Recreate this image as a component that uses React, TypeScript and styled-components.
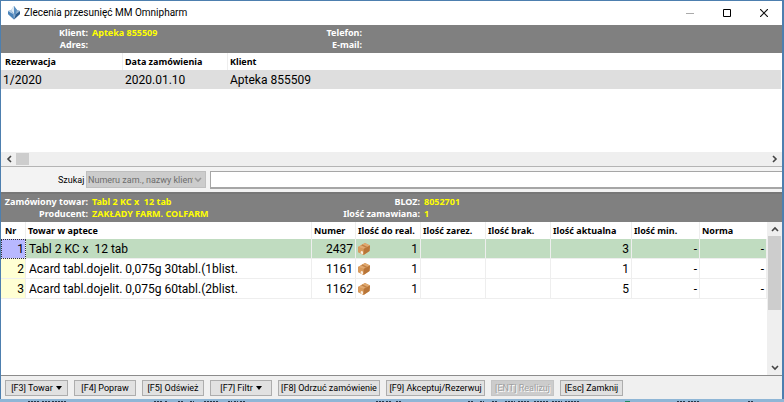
import React from 'react';
import styled, { createGlobalStyle, css } from 'styled-components';

const labelFont = '"Noto Sans", "Open Sans", sans-serif';
const cellFont = 'Roboto, "Noto Sans", sans-serif';
const controlFont = 'Roboto, "Noto Sans", sans-serif';

const GlobalStyle = createGlobalStyle`
  * { box-sizing: border-box; }
  body { margin: 0; background: #8fb6d6; color: #000; }
`;

const Desktop = styled.div`
  min-height: 100vh;
  display: flex;
  flex-direction: column;
`;

const Window = styled.main`
  flex: 1;
  display: flex;
  flex-direction: column;
  background: #fff;
  border: 1px solid #4d7faf;
  border-right-width: 2px;
  border-bottom-width: 0;
`;

const TitleBar = styled.header`
  height: 24px;
  display: flex;
  align-items: center;
  padding-left: 6px;
`;

const Title = styled.h1`
  flex: 1;
  margin: 0 0 0 3px;
  font: 400 10px/16px ${cellFont};
`;

const CaptionButton = styled.button`
  width: 37px;
  height: 24px;
  padding: 0;
  border: 0;
  background: none;
  display: grid;
  place-items: center;
`;

const InfoBar = styled.section<{ $wide?: boolean }>`
  display: grid;
  grid-template-columns: 87px ${p => (p.$wide ? '236px' : '178px')} 88px 1fr;
  column-gap: 4px;
  align-content: center;
  height: 28px;
  background: #808080;
  color: #fff;
  font: 700 9px/12px ${labelFont};
  white-space: pre;
`;

const InfoLabel = styled.span`
  text-align: right;
`;

const InfoValue = styled.span`
  color: #ff0;
`;

const Table = styled.table`
  width: 100%;
  table-layout: fixed;
  border-collapse: separate;
  border-spacing: 0;
  font: 400 12px/18px ${cellFont};
  white-space: pre;
`;

const Col = styled.col<{ $w?: number }>`
  ${p => p.$w && css`width: ${p.$w}px;`}
`;

const HeadCell = styled.th`
  height: 17px;
  padding: 0 0 0 2px;
  text-align: left;
  font: 700 9px/16px ${labelFont};
  border-right: 1px solid #eee;
  &:first-child { padding-left: 4px; }
  &:last-child { border-right: 0; }
`;

const OrderRow = styled.tr`
  background: #dedede;
`;

const OrderCell = styled.td`
  height: 19px;
  padding: 0 2px;
`;

const ItemRow = styled.tr<{ $selected?: boolean }>`
  background: ${p => (p.$selected ? '#c0dcc0' : '#fff')};
`;

const ItemCell = styled.td<{ $num?: boolean }>`
  height: 20px;
  padding: 0 2px 0 3px;
  text-align: ${p => (p.$num ? 'right' : 'left')};
  border-right: 1px solid #eee;
  border-bottom: 1px solid #eee;
`;

const IndexCell = styled(ItemCell)<{ $selected?: boolean }>`
  padding-right: 1px;
  background: ${p => (p.$selected ? '#b8b8ff' : '#ffffd4')};
  ${p => p.$selected && css`outline: 1px dotted #333; outline-offset: -1px;`}
`;

const Stock = styled.div`
  display: flex;
  align-items: center;
  justify-content: space-between;
  margin-left: -2px;
`;

const OrdersPane = styled.section`
  height: 99px;
  padding-right: 1px;
`;

const HScroll = styled.div`
  height: 14px;
  display: flex;
  align-items: center;
  background: #efefef;
`;

const HThumb = styled.div`
  width: 13px;
  height: 12px;
  background: #cdcdcd;
`;

const Spacer = styled.div`
  flex: 1;
`;

const ScrollButton = styled.button`
  width: 15px;
  height: 14px;
  flex: none;
  padding: 0;
  border: 0;
  background: none;
  display: grid;
  place-items: center;
`;

const SearchBar = styled.form`
  height: 28px;
  display: flex;
  align-items: center;
  padding-left: 57px;
  background: #f3f3f3;
  border-top: 1px solid #b4b4b4;
  border-bottom: 2px solid #777;
`;

const SearchLabel = styled.label`
  width: 28px;
  font: 400 9px/14px ${controlFont};
`;

const SelectBox = styled.div`
  width: 120px;
  height: 17px;
  display: flex;
  align-items: center;
  background: #ccc;
  border: 1px solid #bfbfbf;
  padding-right: 3px;
`;

const Select = styled.select`
  flex: 1;
  min-width: 0;
  height: 15px;
  padding: 0 1px;
  border: 0;
  appearance: none;
  background: transparent;
  font: 400 9px/14px ${controlFont};
  color: #6d6d6d;
  opacity: 1;
  text-overflow: clip;
  overflow: hidden;
`;

const SearchInput = styled.input`
  flex: 1;
  min-width: 0;
  height: 18px;
  margin-left: 4px;
  padding: 0 3px;
  background: #fff;
  border: 1px solid #a6a6a6;
  border-width: 1px 0 2px 1px;
  font: 400 10px/14px ${controlFont};
`;

const ItemsPane = styled.section`
  flex: 1;
  display: flex;
`;

const ItemsTableArea = styled.div`
  flex: 1;
  min-width: 0;
`;

const VScroll = styled.div`
  width: 15px;
  display: flex;
  flex-direction: column;
  align-items: center;
  justify-content: space-between;
  background: #efefef;
`;

const VTop = styled.div`
  display: flex;
  flex-direction: column;
  align-items: center;
`;

const VThumb = styled.div`
  width: 13px;
  height: 74px;
  background: #cdcdcd;
`;

const Toolbar = styled.footer`
  display: flex;
  gap: 6px;
  padding: 4px 4px 3px;
  background: #f0f0f0;
  border-top: 1px solid #8c8c8c;
`;

const ToolButton = styled.button<{ $w: number }>`
  width: ${p => p.$w}px;
  height: 16px;
  padding: 0;
  display: flex;
  align-items: center;
  justify-content: center;
  gap: 3px;
  border: 1px solid #adadad;
  background: #e1e1e1;
  color: #000;
  font: 400 9px/14px ${controlFont};
  white-space: nowrap;
  &:disabled {
    background: #ccc;
    border-color: #c4c4c4;
    color: #a0a0a0;
    text-shadow: 1px 1px 0 #fff;
  }
`;

const Behind = styled.svg`
  display: block;
  width: 100%;
  height: 3px;
`;

function AppIcon() {
  return (
    <svg width="14" height="14" viewBox="0 0 14 14" aria-hidden="true">
      <path d="M7 0 10 4 13 5 13 8 7 13.500 1 8 1 5 4 4Z" fill="#86a8ca" />
      <path d="M7 0 8 5 7 8 4 4Z" fill="#e0ecf6" />
      <path d="M7 0 10 4 9 9 7 8Z" fill="#5b8fc0" />
      <path d="M1 5 6 8 7 13.500 1 8Z" fill="#4a84bb" />
      <path d="M13 5 9 8 7 13.500 13 8Z" fill="#2b5c8e" />
      <path d="M4 4 6 8 1 5Z" fill="#b8d0e6" />
      <path d="M10 4 13 5 9 8Z" fill="#93b4d2" />
    </svg>
  );
}

function BoxIcon() {
  return (
    <svg width="14" height="14" viewBox="0 0 14 14" aria-hidden="true">
      <path d="M1 5 8 1 13 3.500 12.500 9 6.500 13 1 10Z" fill="#cf8f50" />
      <path d="M1 5 8 1 13 3.500 6.500 7Z" fill="#e0a970" />
      <path d="M6.500 7 13 3.500 12.500 9 6.500 13Z" fill="#b87538" />
      <path d="M1 5 6.500 7 6.500 13 1 10Z" fill="#d79a5c" />
      <path d="M4 3.300 5.600 2.400 10.500 4.900 9 5.700Z" fill="#bf8145" />
      <path d="M4 9 6 9.600 6 12.400 3.500 11.200Z" fill="#faeddd" />
    </svg>
  );
}

const arrows = {
  left: 'M6 1 3 4 6 7',
  right: 'M2 1 5 4 2 7',
  up: 'M1 6 4 3 7 6',
  down: 'M1 2 4 5 7 2',
};

function Chevron({ dir, color = '#444' }: { dir: keyof typeof arrows; color?: string }) {
  return (
    <svg width="8" height="8" viewBox="0 0 8 8" aria-hidden="true">
      <path d={arrows[dir]} fill="none" stroke={color} strokeWidth="1.6" />
    </svg>
  );
}

const items = [
  { nr: 1, name: 'Tabl 2 KC x  12 tab', num: 2437, real: 1, now: 3 },
  { nr: 2, name: 'Acard tabl.dojelit. 0,075g 30tabl.(1blist.', num: 1161, real: 1, now: 1 },
  { nr: 3, name: 'Acard tabl.dojelit. 0,075g 60tabl.(2blist.', num: 1162, real: 1, now: 5 },
];

const itemHeads = ['Nr', 'Towar w aptece', 'Numer', 'Ilość do real.', 'Ilość zarez.', 'Ilość brak.', 'Ilość aktualna', 'Ilość min.', 'Norma'];
const itemWidths = [25, undefined, 44, 65, 65, 65, 81, 68, 67];

const actions = [
  { text: '[F3] Towar', w: 63, menu: true },
  { text: '[F4] Popraw', w: 62 },
  { text: '[F5] Odśwież', w: 62 },
  { text: '[F7] Filtr', w: 62, menu: true },
  { text: '[F8] Odrzuć zamówienie', w: 102 },
  { text: '[F9] Akceptuj/Rezerwuj', w: 99 },
  { text: '[ENT] Realizuj', w: 63, disabled: true },
  { text: '[Esc] Zamknij', w: 63 },
];

const fragments = [
  [28, 12], [42, 8], [52, 14], [154, 8], [165, 3], [178, 6], [190, 4], [204, 14], [228, 4], [234, 4], [240, 5],
  [376, 8], [386, 6], [396, 5], [468, 6], [480, 4], [492, 6], [505, 10], [518, 12], [534, 14], [552, 10], [565, 15],
  [677, 8], [688, 12], [748, 5],
];

export default function App() {
  return (
    <Desktop>
      <GlobalStyle />
      <Window>
        <TitleBar>
          <AppIcon />
          <Title>Zlecenia przesunięć MM Omnipharm</Title>
          <CaptionButton aria-label="Minimalizuj" disabled>
            <svg width="8" height="8"><path d="M0 4.5H8" stroke="#aaa" /></svg>
          </CaptionButton>
          <CaptionButton aria-label="Maksymalizuj">
            <svg width="8" height="8"><path d="M.5 .5H7.5V7.5H.5Z" fill="none" stroke="#000" /></svg>
          </CaptionButton>
          <CaptionButton aria-label="Zamknij okno">
            <svg width="8" height="8"><path d="M0 0 8 8M8 0 0 8" stroke="#111" strokeWidth="1.2" /></svg>
          </CaptionButton>
        </TitleBar>

        <InfoBar>
          <InfoLabel>Klient:</InfoLabel><InfoValue>Apteka 855509</InfoValue>
          <InfoLabel>Telefon:</InfoLabel><InfoValue />
          <InfoLabel>Adres:</InfoLabel><InfoValue />
          <InfoLabel>E-mail:</InfoLabel><InfoValue />
        </InfoBar>

        <OrdersPane>
          <Table>
            <colgroup><Col $w={122} /><Col $w={105} /><Col /></colgroup>
            <thead>
              <tr><HeadCell>Rezerwacja</HeadCell><HeadCell>Data zamówienia</HeadCell><HeadCell>Klient</HeadCell></tr>
            </thead>
            <tbody>
              <OrderRow><OrderCell>1/2020</OrderCell><OrderCell>2020.01.10</OrderCell><OrderCell>Apteka 855509</OrderCell></OrderRow>
            </tbody>
          </Table>
        </OrdersPane>
        <HScroll>
          <ScrollButton aria-label="Przewiń w lewo"><Chevron dir="left" /></ScrollButton>
          <HThumb />
          <Spacer />
          <ScrollButton aria-label="Przewiń w prawo"><Chevron dir="right" /></ScrollButton>
        </HScroll>

        <SearchBar>
          <SearchLabel htmlFor="search">Szukaj</SearchLabel>
          <SelectBox>
            <Select disabled aria-label="Szukaj według"><option>Numeru zam., nazwy klienta</option></Select>
            <Chevron dir="down" color="#999" />
          </SelectBox>
          <SearchInput id="search" type="text" />
        </SearchBar>

        <InfoBar $wide>
          <InfoLabel>Zamówiony towar:</InfoLabel><InfoValue>Tabl 2 KC x  12 tab</InfoValue>
          <InfoLabel>BLOZ:</InfoLabel><InfoValue>8052701</InfoValue>
          <InfoLabel>Producent:</InfoLabel><InfoValue>ZAKŁADY FARM. COLFARM</InfoValue>
          <InfoLabel>Ilość zamawiana:</InfoLabel><InfoValue>1</InfoValue>
        </InfoBar>

        <ItemsPane>
          <ItemsTableArea>
            <Table>
              <colgroup>{itemWidths.map((w, i) => <Col key={i} $w={w} />)}</colgroup>
              <thead><tr>{itemHeads.map(h => <HeadCell key={h}>{h}</HeadCell>)}</tr></thead>
              <tbody>
                {items.map(({ nr, name, num, real, now }) => (
                  <ItemRow key={nr} $selected={nr === 1}>
                    <IndexCell $num $selected={nr === 1}>{nr}</IndexCell>
                    <ItemCell>{name}</ItemCell>
                    <ItemCell $num>{num}</ItemCell>
                    <ItemCell><Stock><BoxIcon />{real}</Stock></ItemCell>
                    <ItemCell />
                    <ItemCell />
                    <ItemCell $num>{now}</ItemCell>
                    <ItemCell $num>-</ItemCell>
                    <ItemCell $num>-</ItemCell>
                  </ItemRow>
                ))}
              </tbody>
            </Table>
          </ItemsTableArea>
          <VScroll>
            <VTop>
              <ScrollButton aria-label="Przewiń w górę"><Chevron dir="up" /></ScrollButton>
              <VThumb />
            </VTop>
            <ScrollButton aria-label="Przewiń w dół"><Chevron dir="down" /></ScrollButton>
          </VScroll>
        </ItemsPane>

        <Toolbar>
          {actions.map(a => (
            <ToolButton key={a.text} type="button" $w={a.w} disabled={a.disabled}>
              {a.text}
              {a.menu && <svg width="6" height="4" aria-hidden="true"><path d="M0 0H6L3 4Z" /></svg>}
            </ToolButton>
          ))}
        </Toolbar>
      </Window>
      <Behind aria-hidden="true">
        {fragments.map(([x, w]) => (
          <path key={x} d={`M${x} 2.5h${w}`} stroke="#23384c" strokeDasharray="2 1" />
        ))}
        <path d="M625 2.5h5" stroke="#1d8a5f" />
      </Behind>
    </Desktop>
  );
}
